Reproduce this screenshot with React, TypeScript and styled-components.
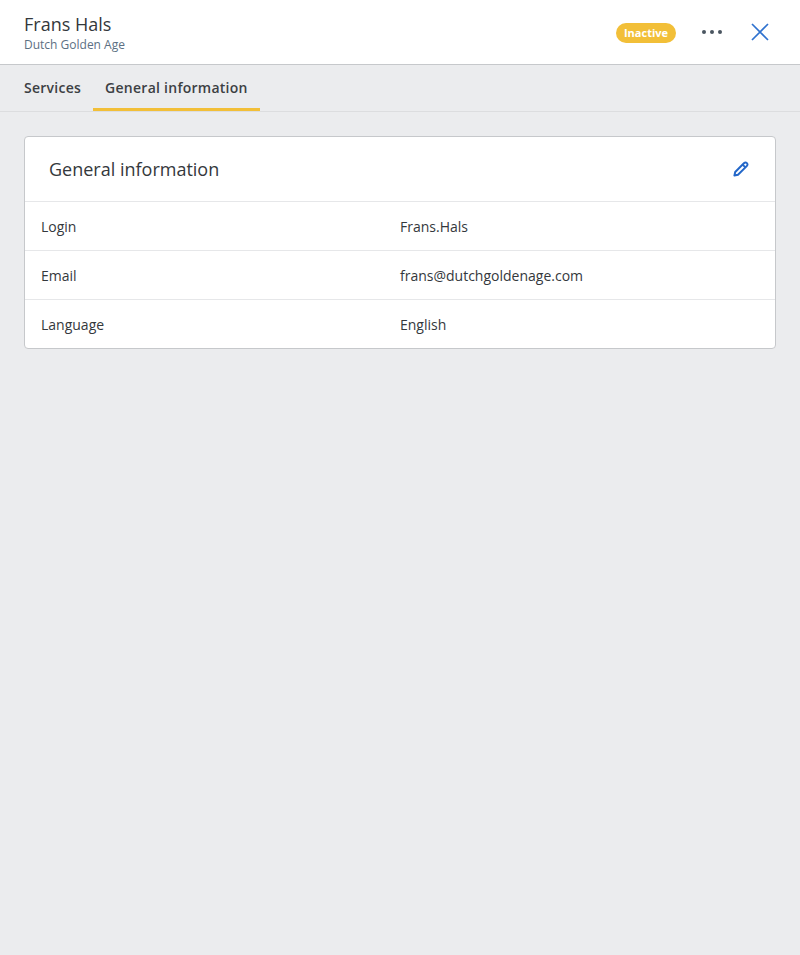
import React from "react";
import styled, { createGlobalStyle } from "styled-components";

const Global = createGlobalStyle`
  html, body { margin: 0; padding: 0; background: #ebecee; }
  body { font-family: "Open Sans", "Noto Sans", sans-serif; color: #34383c; }
  * { box-sizing: border-box; }
`;

const Page = styled.div`
  min-height: 955px;
  display: flex;
  flex-direction: column;
`;

const Header = styled.header`
  height: 65px;
  background: #fff;
  border-bottom: 1px solid #c6c8cb;
  display: flex;
  align-items: flex-start;
  justify-content: space-between;
  padding: 0 24px;
`;

const Titles = styled.div`
  display: flex;
  flex-direction: column;
  padding-top: 12px;
`;

const Name = styled.div`
  font-size: 18px;
  line-height: 25px;
  color: #34383c;
`;

const Sub = styled.div`
  font-size: 12px;
  line-height: 15px;
  color: #5c7083;
`;

const Actions = styled.div`
  display: flex;
  align-items: center;
  height: 64px;
  padding-right: 7px;
`;

const Badge = styled.span`
  width: 60px;
  height: 20px;
  border-radius: 10px;
  background: #f2bf38;
  color: #fff;
  font-size: 11px;
  font-weight: 700;
  line-height: 20px;
  text-align: center;
  margin: 2px 26px 0 0;
`;

const IconButton = styled.button<{ $gap?: number }>`
  border: 0;
  background: none;
  padding: 0;
  display: flex;
  margin-right: ${(p) => p.$gap ?? 0}px;
`;

const Tabs = styled.nav`
  height: 47px;
  border-bottom: 1px solid #dcdddf;
  display: flex;
  padding-left: 12px;
`;

const Tab = styled.div<{ $active?: boolean }>`
  height: 46px;
  padding: 0 12px;
  font-size: 14px;
  font-weight: 600;
  letter-spacing: 0.26px;
  line-height: 46px;
  color: #3c4043;
  border-bottom: 3px solid ${(p) => (p.$active ? "#f2bf38" : "transparent")};
`;

const Content = styled.main`
  padding: 24px;
`;

const Card = styled.section`
  background: #fff;
  border: 1px solid #c6c8cb;
  border-radius: 4px;
`;

const CardHead = styled.div`
  height: 64px;
  display: flex;
  align-items: center;
  justify-content: space-between;
  padding: 0 26px 1px 24px;
`;

const CardTitle = styled.h2`
  margin: 0;
  font-size: 18px;
  font-weight: 400;
  color: #34383c;
`;

const Row = styled.div`
  height: 49px;
  border-top: 1px solid #e6e7e9;
  display: grid;
  grid-template-columns: 359px 1fr;
  align-items: center;
  padding-left: 16px;
  font-size: 14px;
  color: #34383c;
`;

const rows = [
  ["Login", "Frans.Hals"],
  ["Email", "frans@dutchgoldenage.com"],
  ["Language", "English"],
];

export default function App() {
  return (
    <Page>
      <Global />
      <Header>
        <Titles>
          <Name>Frans Hals</Name>
          <Sub>Dutch Golden Age</Sub>
        </Titles>
        <Actions>
          <Badge>Inactive</Badge>
          <IconButton $gap={29} aria-label="More">
            <svg width="20" height="4" viewBox="0 0 20 4" fill="#4a5560">
              <circle cx="2" cy="2" r="2" />
              <circle cx="10" cy="2" r="2" />
              <circle cx="18" cy="2" r="2" />
            </svg>
          </IconButton>
          <IconButton aria-label="Close">
            <svg width="18" height="18" viewBox="0 0 18 18" fill="none" stroke="#2f72cf" strokeWidth="1.7">
              <path d="M1 1L17 17M17 1L1 17" />
            </svg>
          </IconButton>
        </Actions>
      </Header>
      <Tabs>
        <Tab>Services</Tab>
        <Tab $active>General information</Tab>
      </Tabs>
      <Content>
        <Card>
          <CardHead>
            <CardTitle>General information</CardTitle>
            <IconButton aria-label="Edit">
              <svg width="16" height="16" viewBox="0 0 16 16" fill="none" stroke="#2367c9" strokeWidth="2" strokeLinejoin="round">
                <path d="M1.4 14.6L2.2 11L10.9 2.3C11.8 1.4 13 1.2 13.9 2.1C14.8 3 14.6 4.2 13.7 5.1L5 13.8Z" />
                <path d="M9.6 3.6L12.4 6.4" />
              </svg>
            </IconButton>
          </CardHead>
          {rows.map(([k, v]) => (
            <Row key={k}>
              <span>{k}</span>
              <span>{v}</span>
            </Row>
          ))}
        </Card>
      </Content>
    </Page>
  );
}
